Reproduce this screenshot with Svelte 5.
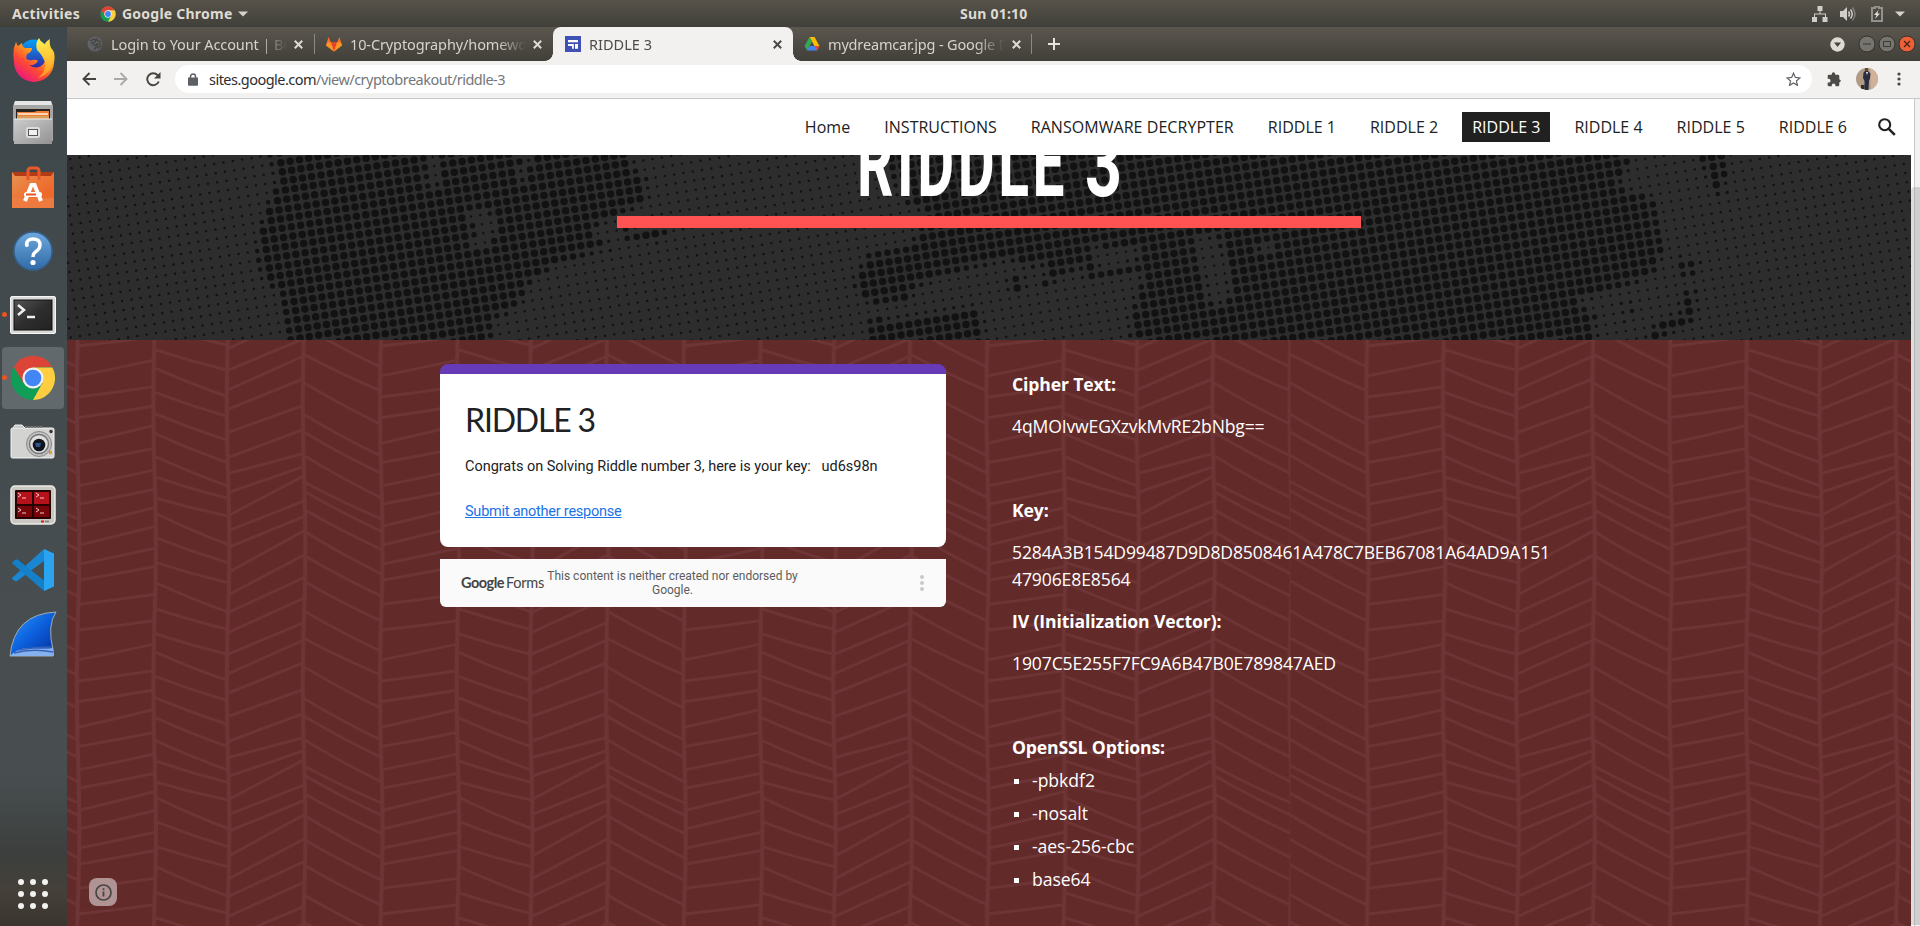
<script>
  // Spaces the letters of an element so that its text takes the given width.
  function fit(node, width) {
    node.style.letterSpacing = '0px';
    const natural = node.getBoundingClientRect().width;
    node.style.letterSpacing = (width - natural) / node.textContent.length + 'px';
  }

  const tabs = [
    { icon: 'globe', title: 'Login to Your Account | Bo', width: 181 },
    { icon: 'gitlab', title: '10-Cryptography/homewo', width: 177 },
    { icon: 'sites', title: 'RIDDLE 3', width: 63, active: true },
    { icon: 'drive', title: 'mydreamcar.jpg - Google D', width: 181 }
  ];

  const nav = [
    ['Home', 45.5], ['INSTRUCTIONS', 112.5], ['RANSOMWARE DECRYPTER', 203], ['RIDDLE 1', 68.2], ['RIDDLE 2', 68.2],
    ['RIDDLE 3', 68.2], ['RIDDLE 4', 68.2], ['RIDDLE 5', 68.2], ['RIDDLE 6', 68.2]
  ];

  const options = [['-pbkdf2', 63], ['-nosalt', 56], ['-aes-256-cbc', 102], ['base64', 58.5]];

  // Halftone banner: dots on a tilted lattice, large inside the blobs.
  const blobs = [
    '268,150 274,170 276,190 268,203 262,222 256,240 258,260 264,283 280,293 286,317 290,345 489,345 493,320 521,303 529,283 558,263 615,245 595,240 592,227 648,200 646,180 631,163 627,150',
    '623,228 665,228 664,240 625,240',
    '883,150 896,183 901,200 932,212 919,230 910,247 870,252 854,283 865,302 910,302 914,287 941,275 990,263 1012,260 1028,268 1044,263 1044,290 1055,278 1070,272 1084,263 1084,280 1146,270 1129,323 1131,345 1593,345 1596,317 1577,300 1632,283 1656,270 1662,253 1660,233 1656,213 1652,197 1616,187 1628,167 1626,150',
    '870,320 919,317 977,308 981,323 986,345 865,345',
    '1697,150 1727,150 1723,197 1713,190',
    '1680,260 1699,262 1695,277 1681,277',
    '1685,290 1697,292 1695,320 1644,345 1656,323 1680,313',
    '1622,290 1634,320 1624,320',
    '1008,276 1024,276 1024,293 1010,293'
  ].map(parse);
  const holes = [
    '423,150 440,150 440,187 428,187',
    '520,150 530,150 527,184 519,178',
    '462,212 485,209 500,220 488,250 465,247 480,232',
    '1090,247 1142,247 1137,263 1102,270 1092,263',
    '1195,233 1218,237 1231,273 1227,307 1209,303 1204,280 1195,260',
    '1258,240 1276,243 1276,253 1258,253'
  ].map(parse);

  function parse(s) {
    return s.split(' ').map((p) => p.split(',').map(Number));
  }
  function inside(poly, x, y) {
    let hit = false;
    for (let i = 0, j = poly.length - 1; i < poly.length; j = i++) {
      const [xi, yi] = poly[i];
      const [xj, yj] = poly[j];
      if (yi > y !== yj > y && x < ((xj - xi) * (y - yi)) / (yj - yi) + xi) hit = !hit;
    }
    return hit;
  }
  function dark(x, y) {
    return blobs.some((p) => inside(p, x, y)) && !holes.some((p) => inside(p, x, y));
  }
  function halftone() {
    let d = '';
    for (let i = -60; i < 200; i++) {
      for (let j = -30; j < 60; j++) {
        const x = 280.8 + i * 9.3 + j * 1.5;
        const y = 162.7 - i * 1.5 + j * 9.15;
        if (x < 62 || x > 1916 || y < 150 || y > 345) continue;
        let n = 0;
        for (const [dx, dy] of [[0, 0], [4, 0], [-4, 0], [0, 4], [0, -4]]) if (dark(x + dx, y + dy)) n++;
        const r = 1.25 + (n / 5) * 2.5;
        d += `M${(x - 67 - r).toFixed(1)} ${(y - 155).toFixed(1)}a${r} ${r} 0 1 0 ${2 * r} 0a${r} ${r} 0 1 0 ${-2 * r} 0`;
      }
    }
    return d;
  }
  const dots = halftone();

  // Herringbone tile: left and right heights of each stroke, in thirds of a pixel.
  const rise = [[30, 2], [120, 72], [183, 152], [245, 210], [322, 268], [380, 337], [450, 402], [505, 460], [572, 515], [628, 572], [685, 637], [733, 692], [805, 775]];
  const fall = [[-35, 28], [40, 103], [95, 182], [168, 242], [232, 313], [292, 380], [360, 450], [422, 487], [485, 540], [530, 625], [603, 680], [678, 740], [738, 828]];
  const climb = [[38, -65], [103, 8], [162, 60], [220, 128], [290, 208], [365, 280], [413, 352], [470, 392], [540, 420], [585, 495], [635, 542], [710, 585], [778, 658], [830, 725]];
  const steep = [[-28, 94], [55, 165], [140, 265], [235, 360], [288, 412], [358, 485], [437, 548], [465, 585], [520, 640], [585, 713], [658, 780], [735, 855]];
  function herringbone() {
    let strokes = '';
    let seams = '';
    const column = (x0, x1, rows) => {
      const w = x1 - x0;
      for (const k of [-284, 0, 284]) {
        for (const [l, r] of rows) {
          const a = l / 3 - 4 + k;
          const b = r / 3 - 4 + k;
          const bend = (b - a) * 0.03 + 1;
          strokes += `M${x0} ${a}Q${x0 + w * 0.5} ${(a + b) / 2 + bend} ${x1} ${b}`;
        }
      }
      seams += `M${x1} 0Q${x1 - 2} 70 ${x1 + 0.5} 142T${x1} 284`;
    };
    column(0, 76.7, steep);
    for (let n = 0; n < 4; n++) {
      const o = 76.7 + n * 303.2;
      column(o, o + 76.6, rise);
      column(o + 76.6, o + 150, fall);
      column(o + 150, o + 226, climb);
      column(o + 226, o + 303.2, steep);
    }
    return { strokes, seams };
  }
  const weave = herringbone();
</script>

{#snippet chrome(size)}
  <svg width={size} height={size} viewBox="0 0 48 48">
    <circle cx="24" cy="24" r="23" fill="#109d58" />
    <path d="M4 12.5L14.5 30 24 24 24 13 44 12.5A23 23 0 0 0 4 12.5" fill="#db4437" />
    <path d="M24 13H44.200A23 23 0 0 1 24 47L34 29z" fill="#ffcd40" />
    <circle cx="24" cy="24" r="11" fill="#f1f1f1" />
    <circle cx="24" cy="24" r="8.700" fill="#4285f4" />
  </svg>
{/snippet}

<div class="desktop">
  <header class="panel">
    <span class="activities"><span use:fit={68}>Activities</span></span>
    {@render chrome(16)}
    <span class="app"><span use:fit={110.5}>Google Chrome</span></span>
    <svg class="caret" width="10" height="6" viewBox="0 0 10 6"><path d="M0 .500H10L5 5.500z" fill="#d5d2cc" /></svg>
    <span class="clock"><span use:fit={67.5}>Sun 01:10</span></span>
    <div class="status">
      <svg width="16" height="16" viewBox="0 0 16 16" fill="#d0cec8"><path d="M5.500 0h5v5h-2v2.500H14V11h1.500v5h-5v-5H13V8.500H3V11h2v5H0v-5h2V7.500h5.500V5h-2z" /></svg>
      <svg width="16" height="16" viewBox="0 0 16 16" fill="none" stroke="#d0cec8" stroke-width="1.500"><path d="M0 5h3l4-4v14l-4-4H0z" fill="#d0cec8" stroke="none" /><path d="M8.500 5.500q2 2.500 0 5M10.500 3.500q3.500 4.500 0 9" /><path d="M12.500 1.500q5 6.500 0 13" opacity=".4" /></svg>
      <svg width="12" height="16" viewBox="0 0 12 16"><path d="M1 2h3V.800h4V2h3v13H1z" fill="none" stroke="#93918b" stroke-width="2" /><path d="M7.500 4L3 9h2.500L4 13l5-5.500H6.500z" fill="#e0ded8" /></svg>
      <svg width="10" height="6" viewBox="0 0 10 6"><path d="M0 .500H10L5 5.500z" fill="#d5d2cc" /></svg>
    </div>
  </header>

  <div class="body">
    <aside class="dock">
      <div class="slot">
        <svg width="44" height="48" viewBox="0 0 44 48">
          <defs>
            <linearGradient id="fx" x1=".9" y1="0" x2=".2" y2="1"><stop offset="0" stop-color="#fff04a" /><stop offset=".35" stop-color="#ffb01c" /><stop offset=".65" stop-color="#ff4a33" /><stop offset="1" stop-color="#e5108a" /></linearGradient>
            <linearGradient id="fy" x1=".5" y1="0" x2=".5" y2="1"><stop offset="0" stop-color="#fff44f" /><stop offset="1" stop-color="#ff9320" /></linearGradient>
            <linearGradient id="fb" x1=".5" y1="0" x2=".5" y2="1"><stop offset="0" stop-color="#02a2fb" /><stop offset="1" stop-color="#3a1b98" /></linearGradient>
          </defs>
          <circle cx="23" cy="20" r="15.500" fill="url(#fb)" />
          <path d="M5 7q1 3 2 4l4-3q0 4 3 5l7 0q0 4-5 6l-1 4q2 3 6 2 4-1 6 1-3 5-9 4 9 6 15-2 4-6-1-14 2-8 7-10-1 4 1 9 5 4 3 15a20 20 0 0 1-40-2Q1 15 5 7z" fill="url(#fx)" />
          <path d="M28 3q1 3 4 5 9 6 10 16-1 15-15 19 9-7 7-16-4-9-8-12-2-7 2-12z" fill="url(#fy)" />
        </svg>
      </div>
      <div class="slot">
        <svg width="42" height="46" viewBox="0 0 42 46">
          <defs><linearGradient id="cab" x1="0" y1="0" x2="1" y2="1"><stop offset="0" stop-color="#cdcdcd" /><stop offset="1" stop-color="#929292" /></linearGradient></defs>
          <path d="M3 1h36l2 5v35H1V6z" fill="#a6a6a6" /><path d="M3 1h36l1 4H2z" fill="#e6e6e6" />
          <rect x="4" y="9" width="34" height="10" fill="#262321" /><path d="M5 12h17l3-1h12v7H5z" fill="#ef7f38" /><path d="M6 14h30" stroke="#fff3dc" stroke-width="1.500" /><path d="M5 16h32v3H5z" fill="#d9a05c" />
          <rect x="2" y="19" width="38" height="25" fill="url(#cab)" /><path d="M2 19h38" stroke="#eee" />
          <rect x="14" y="27" width="14" height="11" rx="2.500" fill="#ddd" /><rect x="16.500" y="29.500" width="9" height="6" fill="#f0f0f0" stroke="#555" />
        </svg>
      </div>
      <div class="slot">
        <svg width="42" height="44" viewBox="0 0 42 44">
          <defs><linearGradient id="bag" x1="0" y1="0" x2=".6" y2=".7"><stop offset="0" stop-color="#e89455" /><stop offset="1" stop-color="#ee6a2b" /></linearGradient></defs>
          <path d="M0 7h42l-2 5H2z" fill="#b33c17" /><path d="M0 7l3 4h36l3-4v36H0z" fill="url(#bag)" /><path d="M0 33h42v10H0z" fill="#f08148" opacity=".7" />
          <path d="M16 15V6q0-3 3-3h5q3 0 3 3v9" fill="none" stroke="#e9582b" stroke-width="3" />
          <path d="M13 36l6.500-16h3L29 36" fill="none" stroke="#fff" stroke-width="4" /><rect x="12" y="27" width="18" height="5" rx="2.500" fill="#fff" /><rect x="14" y="28.500" width="10" height="2" fill="#e95420" />
        </svg>
      </div>
      <div class="slot">
        <svg width="42" height="42" viewBox="0 0 42 42">
          <defs><linearGradient id="help" x1="0" y1="0" x2="0" y2="1"><stop offset="0" stop-color="#6fa8dc" /><stop offset="1" stop-color="#2f6ba8" /></linearGradient></defs>
          <circle cx="21" cy="21" r="19" fill="url(#help)" stroke="#35628f" stroke-width="1.500" />
          <path d="M14.500 15q0-6 6.500-6 7 0 7 6 0 4-4 6.500-3 2-3 5.500" fill="none" stroke="#fff" stroke-width="3.400" /><circle cx="14.800" cy="15" r="2" fill="#fff" /><circle cx="21" cy="32.500" r="2.600" fill="#fff" />
        </svg>
      </div>
      <div class="slot running">
        <svg width="46" height="38" viewBox="0 0 46 38">
          <defs><linearGradient id="term" x1="0" y1="0" x2="1" y2="1"><stop offset="0" stop-color="#555" /><stop offset=".5" stop-color="#2e2e2e" /><stop offset="1" stop-color="#222" /></linearGradient></defs>
          <rect x=".5" y=".5" width="45" height="37" rx="1.500" fill="#d9d9d7" stroke="#f5f5f5" /><rect x="4" y="4" width="38" height="30" fill="url(#term)" stroke="#111" />
          <path d="M8 9l6 5-6 5M17 21h8" fill="none" stroke="#f0f0f0" stroke-width="2.500" />
        </svg>
      </div>
      <div class="slot running current">{@render chrome(46)}</div>
      <div class="slot">
        <svg width="46" height="36" viewBox="0 0 46 36">
          <rect x="1" y="4" width="43" height="30" rx="1.500" fill="#d3d3d1" stroke="#f3f3f3" /><path d="M3 4l2-3h7l3 3" fill="#ccc" stroke="#eee" /><path d="M15 3h17" stroke="#777" stroke-width="2" stroke-dasharray="2 1" />
          <circle cx="29" cy="20" r="12.500" fill="#c0c0c0" stroke="#888" /><circle cx="29" cy="20" r="9.500" fill="#e0e0e0" stroke="#777" stroke-width="1.500" /><circle cx="29" cy="21" r="6.300" fill="#10151d" /><path d="M25 19h6l-1 4h-4z" fill="#2d528c" />
          <circle cx="41" cy="7.500" r="1.700" fill="#333" /><path d="M39 27h3v3h-3z" fill="#e29b30" />
        </svg>
      </div>
      <div class="slot">
        <svg width="46" height="42" viewBox="0 0 46 42">
          <rect x="1" y="1" width="44" height="38" rx="4" fill="#c9c8c2" stroke="#eceae4" stroke-width="1.500" /><rect x="5" y="5" width="36" height="29" rx="1" fill="#260303" />
          <path d="M7 7h15v12H7zM24 7h15v12H24z" fill="#b5121b" /><path d="M7 21h15v11H7zM24 21h15v11H24z" fill="#780509" />
          <path d="M8 8l3 2-3 2M12 13h4M26 8l3 2-3 2M30 13h4M8 23l3 2-3 2M12 28h4M26 23l3 2-3 2M30 28h4" fill="none" stroke="#f2c7c7" />
          <path d="M31 36.500h3" stroke="#e11" stroke-width="2" /><path d="M35 36.500h4" stroke="#888" stroke-width="2" />
        </svg>
      </div>
      <div class="slot">
        <svg width="43" height="43" viewBox="0 0 43 43">
          <path d="M0 14l3-3q1-1 3 0l26 21v10z" fill="#1372b8" /><path d="M0 29L32 0v12L5 32q-1 .500-2 0l-3-2z" fill="#1a87d3" /><path d="M0 14l3-3q1-1 3 0l28 22-3 8z" fill="#1580c8" /><path d="M32 0l10 4.500v33L32 42z" fill="#2aa4f0" />
        </svg>
      </div>
      <div class="slot">
        <svg width="48" height="46" viewBox="0 0 48 46">
          <defs><linearGradient id="fin" x1="0" y1="0" x2="1" y2="1"><stop offset="0" stop-color="#2a97fa" /><stop offset=".5" stop-color="#0c5fdc" /><stop offset="1" stop-color="#052c98" /></linearGradient></defs>
          <path d="M1 45Q5 3 47 1q-9 13-3 38v6z" fill="url(#fin)" stroke="#a0acb7" stroke-width="1" /><path d="M1 45q8-9 21-8t22 0l1 8z" fill="#87b0ee" /><path d="M5 42q18-5 39-1M9 39q18-3 34-3" fill="none" stroke="#3464ba" stroke-width="1.500" />
        </svg>
      </div>
      <div class="launcher">{#each Array(9) as _}<i></i>{/each}</div>
    </aside>

    <main class="window">
      <div class="tabstrip">
        {#each tabs as tab, n}
          <div class="tab t{n}" class:active={tab.active}>
            {#if tab.icon === 'globe'}
              <svg width="16" height="16" viewBox="0 0 16 16"><circle cx="8" cy="8" r="7.500" fill="#5f6368" /><path d="M3 5l4-2 2 1-1 2-3 1 2 2 3 0-1 2-2 3M9 2l2 3 3 1M10 8l3 0 1 2-3 2z" fill="none" stroke="#484840" stroke-width="1.500" /></svg>
            {:else if tab.icon === 'gitlab'}
              <svg width="16" height="16" viewBox="0 0 16 16"><path d="M8 15.500L0 9.500 2.500 1 5 6.500h6L13.500 1 16 9.500z" fill="#fc6d26" /><path d="M8 15.500L5 6.500h6z" fill="#e24329" /><path d="M0 9.500L1 6.500h4l3 9zM16 9.500l-1-3h-4l-3 9z" fill="#fca326" opacity=".75" /></svg>
            {:else if tab.icon === 'sites'}
              <svg width="16" height="16" viewBox="0 0 16 16"><path d="M0 0h16v16H0z" fill="#3f51b5" /><path d="M3 4h10v2.200H3zM3 8h5.500v2H3zM7 8h1.800v4.800H7zM10 8h3v4.800h-3z" fill="#fff" /></svg>
            {:else}
              <svg width="16" height="16" viewBox="0 0 16 16"><path d="M5.500 1h5l5 9h-5z" fill="#fbbc04" /><path d="M5.500 1L8 5.500 3 14.500.500 10z" fill="#34a853" /><path d="M3 14.500L5.500 10h10L13 14.500z" fill="#4285f4" /><path d="M10.500 10h5L13 14.500z" fill="#ea4335" /></svg>
            {/if}
            <div class="title"><span use:fit={tab.width}>{tab.title}</span></div>
            <svg class="close" width="9" height="9" viewBox="0 0 9 9"><path d="M.800.800l7.400 7.400M8.200.800L.800 8.200" stroke="currentColor" stroke-width="2" /></svg>
          </div>
        {/each}
        <svg class="plus" width="12" height="12" viewBox="0 0 12 12"><path d="M6 0v12M0 6h12" stroke="#e6e3dc" stroke-width="2" /></svg>
        <div class="controls">
          <svg width="15" height="15" viewBox="0 0 15 15"><circle cx="7.500" cy="7.500" r="7.200" fill="#dfdbd2" /><path d="M4 5.500h7l-3.500 4.500z" fill="#45433d" /></svg>
          <svg width="18" height="18" viewBox="0 0 18 18"><circle cx="9" cy="9" r="8" fill="#76746e" stroke="#33322d" /><path d="M5 9h8" stroke="#3a3934" /></svg>
          <svg width="18" height="18" viewBox="0 0 18 18"><circle cx="9" cy="9" r="8" fill="#76746e" stroke="#33322d" /><path d="M5.500 6.500h7v5h-7z" fill="none" stroke="#3a3934" /></svg>
          <svg width="18" height="18" viewBox="0 0 18 18"><circle cx="9" cy="9" r="8" fill="#ec6037" stroke="#33322d" /><path d="M6 6l6 6M12 6l-6 6" stroke="#4a2115" stroke-width="1.300" /></svg>
        </div>
      </div>

      <div class="toolbar">
        <svg class="back" width="14" height="14" viewBox="0 0 14 14"><path d="M14 7H1.500M7.500 1L1.500 7l6 6" fill="none" stroke="#45443f" stroke-width="1.900" /></svg>
        <svg class="forward" width="14" height="14" viewBox="0 0 14 14"><path d="M0 7h12.500M6.500 1l6 6-6 6" fill="none" stroke="#aaa9a6" stroke-width="1.900" /></svg>
        <svg class="reload" width="15" height="15" viewBox="0 0 15 15"><path d="M12.800 9.500A6 6 0 1 1 11.800 3.300L13 4.500" fill="none" stroke="#45443f" stroke-width="1.900" /><path d="M14.500 0v6.500H8z" fill="#45443f" /></svg>
        <div class="omnibox">
          <svg width="10" height="13" viewBox="0 0 10 13"><path d="M0 4.500h10V12q0 .800-.800.800H.800Q0 12.800 0 12z" fill="#5c6065" /><path d="M2.500 5V3.500a2.500 2.500 0 0 1 5 0V5" fill="none" stroke="#5c6065" stroke-width="1.500" /></svg>
          <div class="url"><span use:fit={296}><b>sites.google.com</b>/view/cryptobreakout/riddle-3</span></div>
          <svg class="star" width="15" height="14" viewBox="0 0 24 23"><path d="M12 2l3 7 7.500.700-5.700 5 1.700 7.300-6.500-3.900L5.500 22l1.700-7.300-5.700-5L9 9z" fill="none" stroke="#5f6368" stroke-width="2" /></svg>
        </div>
        <svg class="puzzle" width="15" height="15" viewBox="0 0 22 22"><path d="M19 11h-1V6q0-2-2-2h-4V3a2.500 2.500 0 0 0-5 0v1H3Q1 4 1 6v4h1.500a2.700 2.700 0 0 1 0 5.400H1V19q0 2 2 2h4v-1.500a2.700 2.700 0 0 1 5.400 0V21H16q2 0 2-2v-4h1a2.500 2.500 0 0 0 0-4z" fill="#4c4b48" /></svg>
        <svg class="avatar" width="22" height="22" viewBox="0 0 22 22"><defs><clipPath id="face"><circle cx="11" cy="11" r="11" /></clipPath></defs><g clip-path="url(#face)"><path d="M0 0h22v22H0z" fill="#b09c85" /><path d="M14 0h8v22h-7z" fill="#d0b29b" /><path d="M7.500 4.500L9 3h3l2.500 2.500-.500 5-1 2-.500 9.500H8.500V13L7 10z" fill="#2b2c40" /><circle cx="10.500" cy="1.500" r="1.800" fill="#60463b" /><path d="M10 4l1 3 1-3z" fill="#eee" /><path d="M5 17h3.500v4H5z" fill="#312d2a" /></g></svg>
        <svg class="more" width="4" height="14" viewBox="0 0 4 14" fill="#45443f"><circle cx="2" cy="2" r="1.600" /><circle cx="2" cy="7" r="1.600" /><circle cx="2" cy="12" r="1.600" /></svg>
      </div>

      <div class="viewport">
        <div class="page">
          <nav>
            {#each nav as [label, width], n}
              <a class:selected={n === 5}><span use:fit={width}>{label}</span></a>
            {/each}
            <svg width="18" height="18" viewBox="0 0 18 18"><circle cx="6.700" cy="6.700" r="5.500" fill="none" stroke="#212121" stroke-width="2.100" /><path d="M10.800 10.800l6 6" stroke="#212121" stroke-width="2.600" /></svg>
          </nav>

          <section class="banner">
            <svg width="1844" height="185" viewBox="0 0 1844 185">
              <path d={dots} fill="#121212" />
              <text class="word" x="790" y="41" textLength="211" lengthAdjust="spacingAndGlyphs">RIDDLE</text>
              <text x="1018" y="41" textLength="37" lengthAdjust="spacingAndGlyphs">3</text>
              <path d="M550 61h744v12H550z" fill="#ff5252" />
            </svg>
          </section>

          <section class="content">
            <svg class="weave" width="1844" height="586">
              <defs>
                <pattern id="tile" x="-66" y="0" width="1289.500" height="284" patternUnits="userSpaceOnUse">
                  <path d={weave.strokes} fill="none" stroke="#6e3436" stroke-width="2.800" />
                  <path d={weave.seams} fill="none" stroke="#6e3436" stroke-width="4" />
                </pattern>
              </defs>
              <rect width="1844" height="586" fill="url(#tile)" />
            </svg>
            <div class="form">
              <div class="card">
                <h2><span use:fit={130}>RIDDLE 3</span></h2>
                <p><span use:fit={412.5}>Congrats on Solving Riddle number 3, here is your key:&nbsp;&nbsp; ud6s98n</span></p>
                <a class="again"><span use:fit={156.5}>Submit another response</span></a>
              </div>
              <footer>
                <div class="brand"><b><span use:fit={43}>Google</span></b><span class="forms"><span use:fit={38}>Forms</span></span></div>
                <p><span use:fit={250.5}>This content is neither created nor endorsed by</span><br /><span use:fit={41}>Google.</span></p>
                <svg width="4" height="16" viewBox="0 0 4 16" fill="#c9c9c9"><circle cx="2" cy="2" r="2" /><circle cx="2" cy="8" r="2" /><circle cx="2" cy="14" r="2" /></svg>
              </footer>
            </div>
            <article>
              <p><b use:fit={104}>Cipher Text:</b></p>
              <p><span use:fit={252.500}>4qMOIvwEGXzvkMvRE2bNbg==</span></p>
              <p>&nbsp;</p>
              <p><b use:fit={36.500}>Key:</b></p>
              <p><span use:fit={538}>5284A3B154D99487D9D8D8508461A478C7BEB67081A64AD9A151</span><br /><span use:fit={118.500}>47906E8E8564</span></p>
              <p><b use:fit={209.500}>IV (Initialization Vector):</b></p>
              <p><span use:fit={324}>1907C5E255F7FC9A6B47B0E789847AED</span></p>
              <p>&nbsp;</p>
              <p><b use:fit={153}>OpenSSL Options:</b></p>
              <ul>
                {#each options as [label, width]}
                  <li><span use:fit={width}>{label}</span></li>
                {/each}
              </ul>
            </article>
            <div class="info">
              <svg width="17" height="17" viewBox="0 0 17 17"><circle cx="8.500" cy="8.500" r="7.500" fill="none" stroke="#4b4444" stroke-width="1.700" /><path d="M8.500 7.500v5M8.500 4.300v1.900" stroke="#4b4444" stroke-width="1.800" /></svg>
            </div>
          </section>
        </div>
        <div class="scroll"><i></i></div>
      </div>
    </main>
  </div>
</div>

<style>
  :global(body) { background: #333; overflow: hidden; }
  .desktop { width: 1920px; height: 926px; overflow: hidden; font-family: "Open Sans", sans-serif; }
  svg { display: block; flex: none; }
  span { display: inline-block; white-space: nowrap; }
  b { display: inline-block; }
  p, h2, ul { margin: 0; padding: 0; }

  .panel { position: relative; display: flex; align-items: center; height: 27px; background: linear-gradient(#57534b, #403f39); color: #dfdbd2; font: 700 14px/27px "Noto Sans", sans-serif; }
  .activities { width: 88px; padding-left: 12px; }
  .app { margin-left: 6px; width: 116px; }
  .caret { margin-left: 0; }
  .clock { margin-left: 712px; }
  .status { margin-left: auto; display: flex; align-items: center; gap: 12px; padding-right: 15px; }
  .status svg:nth-child(2) { margin-right: 3px; }

  .body { display: flex; height: 899px; }
  .dock { display: flex; flex-direction: column; width: 67px; background: linear-gradient(#3e474b, #484e50 70%, #484e50 83%, #3c3f3d 92%, #45403a 96%, #3b352f); }
  .slot { position: relative; display: flex; align-items: center; justify-content: center; width: 66px; height: 63.900px; }
  .current::before { content: ""; position: absolute; left: 2px; top: 1px; width: 62px; height: 62px; border-radius: 4px; background: #62696c; }
  .current svg { position: relative; }
  .running::after { content: ""; position: absolute; left: 2px; top: 29px; width: 5px; height: 5px; border-radius: 50%; background: #e95420; }
  .launcher { display: grid; grid-template-columns: repeat(3, 6px); gap: 6px; margin: auto 0 17px 18px; }
  .launcher i { width: 6px; height: 6px; border-radius: 50%; background: #f2f2f0; }

  .window { width: 1853px; display: flex; flex-direction: column; }
  .tabstrip { display: flex; align-items: center; height: 34px; background: linear-gradient(#5b574f, #413f39); }
  .tab { position: relative; display: flex; align-items: center; height: 34px; box-sizing: border-box; color: #d6d3cb; font: 14.500px/33px "Noto Sans", sans-serif; }
  .t0 { width: 248px; padding-left: 20px; }
  .t1 { width: 238px; padding-left: 11px; }
  .t2 { width: 240px; padding-left: 12px; }
  .t3 { width: 239px; padding-left: 11px; }
  .t0::after, .t3::after { content: ""; position: absolute; right: 0; top: 7px; width: 1px; height: 20px; background: #8b887f; }
  .title { width: 176px; margin-left: 8px; overflow: hidden; mask-image: linear-gradient(90deg, #000 84%, transparent 100%); }
  .close { margin-left: 7px; color: #dedbd3; }
  .t2 .close, .t3 .close { margin-left: 8px; }
  .t2 .close { color: #4b4a46; }
  .active { background: #f2f1f0; color: #4d4c49; border-radius: 8px 8px 0 0; }
  .active::before, .active::after { content: ""; position: absolute; bottom: 0; width: 8px; height: 8px; }
  .active::before { left: -8px; background: radial-gradient(circle at 0 0, transparent 7.500px, #f2f1f0 8px); }
  .active::after { right: -8px; background: radial-gradient(circle at 100% 0, transparent 7.500px, #f2f1f0 8px); }
  .plus { margin-left: 16px; }
  .controls { display: flex; align-items: center; gap: 2px; margin-left: auto; padding-right: 4px; }
  .controls svg:first-child { margin-right: 11px; }

  .toolbar { display: flex; align-items: center; height: 38px; padding-bottom: 1px; box-sizing: border-box; background: #f2f1f0; border-bottom: 1px solid #c9c8c7; }
  .back { margin-left: 15px; }
  .forward { margin-left: 18px; }
  .reload { margin-left: 18px; }
  .omnibox { display: flex; align-items: center; box-sizing: border-box; width: 1637px; height: 28px; margin-left: 14px; padding: 0 11px 0 13px; border-radius: 14px; background: #fff; }
  .url { margin-left: 11px; font: 14.500px/27px "Noto Sans", sans-serif; color: #73777b; }
  .url b { font-weight: 400; color: #2c2d30; }
  .star { margin-left: auto; }
  .puzzle { margin-left: 15px; }
  .avatar { margin-left: 14px; }
  .more { margin-left: 19px; }

  .viewport { display: flex; height: 827px; background: #fff; }
  .page { width: 1844px; }
  nav { display: flex; align-items: center; justify-content: flex-end; gap: 14px; height: 56px; box-sizing: border-box; padding-right: 15px; background: #fff; color: #212121; font-size: 16px; }
  nav a { height: 30px; line-height: 31px; padding: 0 10px; }
  nav a.selected { background: #212121; color: #fff; }
  nav svg { margin-left: 7px; }
  .banner { height: 185px; background: #2d2d2d; overflow: hidden; }
  .banner text { font: 700 95px Roboto, sans-serif; fill: #fff; }
  .banner .word { letter-spacing: 6px; }

  .content { position: relative; display: flex; height: 586px; background: #622a29; color: #fff; overflow: hidden; }
  .weave { position: absolute; left: 0; top: 0; }
  .form { position: relative; width: 506px; margin: 24px 0 0 373px; font-family: Roboto, sans-serif; }
  .card { box-sizing: border-box; height: 183px; padding: 26px 25px 0; border-top: 10px solid #673ab7; border-radius: 8px; background: #fff; color: #202124; }
  h2 { font: 400 32px/40px Lato, sans-serif; }
  .card p { margin-top: 17px; font-size: 14.500px; line-height: 20px; }
  .again { display: block; margin-top: 25px; font-size: 14.500px; line-height: 20px; color: #1a73e8; }
  .again span { text-decoration: underline; }
  footer { display: flex; align-items: center; height: 48px; box-sizing: border-box; margin-top: 12px; padding-left: 21px; border-radius: 0 0 6px 6px; background: #fafafa; color: #5c5c5c; }
  .brand { display: flex; gap: 2px; width: 86px; font: 14.500px/20px Lato, sans-serif; color: #444; }
  .brand b { font-weight: 700; }
  footer p { width: 251px; text-align: center; font-size: 12px; line-height: 14px; }
  footer svg { margin-left: 122px; }
  article { position: relative; width: 560px; margin: 31px 0 0 66px; font-size: 17.600px; line-height: 27px; }
  article p { margin-bottom: 15px; }
  article b { font-weight: 700; }
  ul { list-style: none; margin-top: -12px; }
  li { display: flex; align-items: center; height: 33px; }
  li::before { content: ""; width: 5px; height: 5px; margin: 2px 13px 0 2px; background: #fff; }
  .info { position: absolute; left: 22px; bottom: 20px; width: 28px; height: 28px; display: flex; align-items: center; justify-content: center; border-radius: 8px; background: #b09494; }
  .scroll { width: 9px; box-sizing: border-box; background: linear-gradient(90deg, #fff 3px, #c9c9c9 3px 4px, #f1f1f1 4px); }
  .scroll i { display: block; height: 738px; margin-top: 88px; background: linear-gradient(90deg, #dcdcdc 3px, #b5b5b5 3px 4px, #cfcfcf 4px); border-radius: 4px 0 0 0; }
</style>
